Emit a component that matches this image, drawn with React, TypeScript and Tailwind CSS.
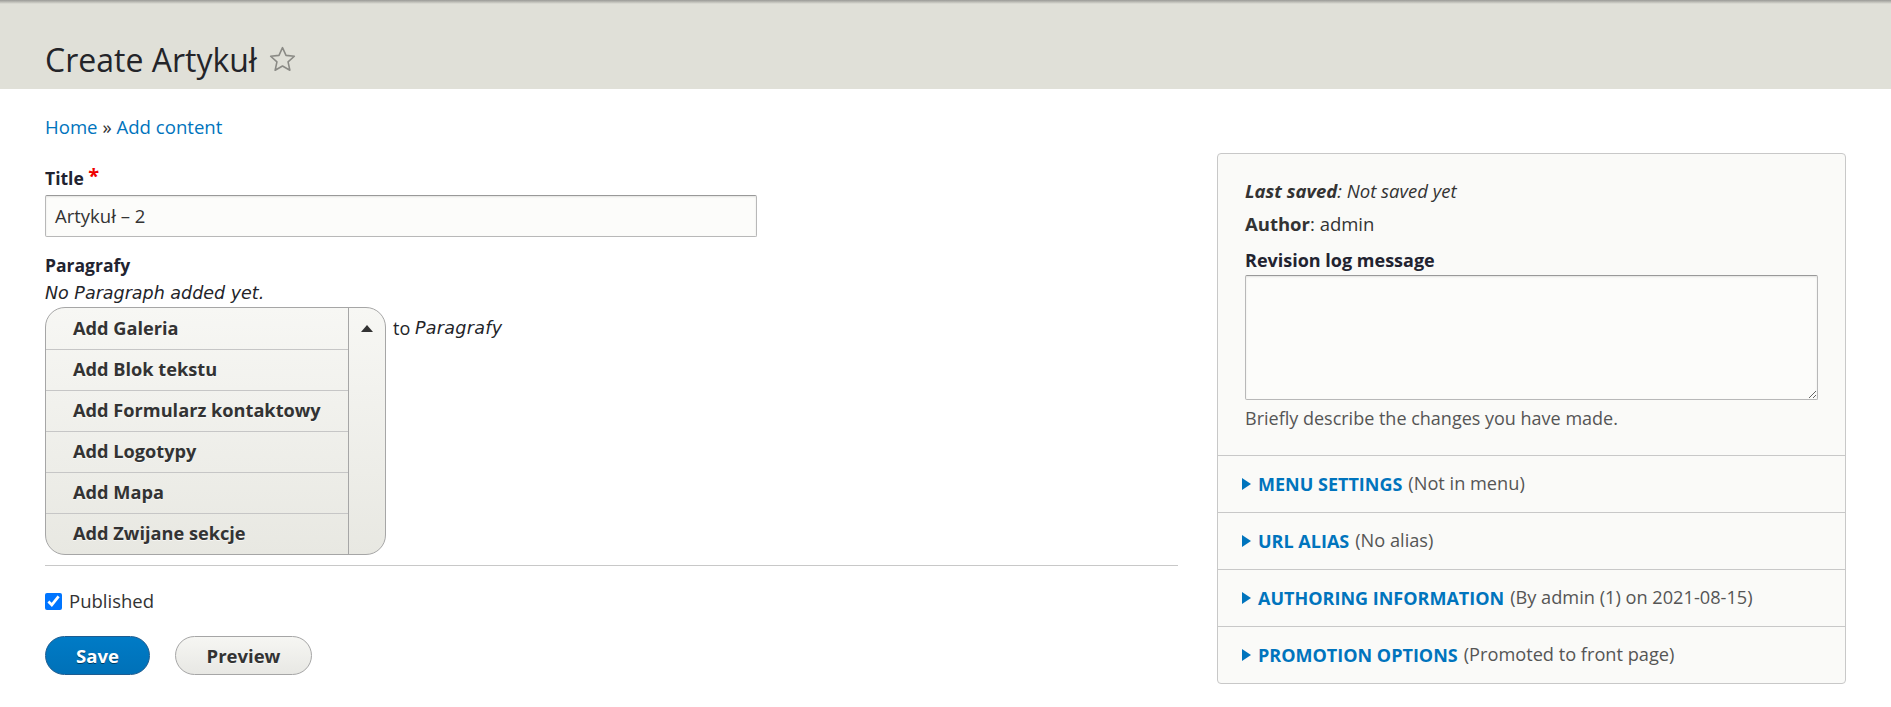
import React from "react";

const items = [
  "Add Galeria",
  "Add Blok tekstu",
  "Add Formularz kontaktowy",
  "Add Logotypy",
  "Add Mapa",
  "Add Zwijane sekcje",
];

const sections: [string, string][] = [
  ["MENU SETTINGS", "(Not in menu)"],
  ["URL ALIAS", "(No alias)"],
  ["AUTHORING INFORMATION", "(By admin (1) on 2021-08-15)"],
  ["PROMOTION OPTIONS", "(Promoted to front page)"],
];

export default function App() {
  return (
    <div className="min-h-[707px] bg-white text-[#232429] font-['Open_Sans','Noto_Sans',sans-serif]">
      <header className="h-[89px] bg-[#e0e0d8] relative">
        <div className="h-[4px] bg-gradient-to-b from-[#9a9a96] to-[#e0e0d8]" />
        <div className="flex items-center pl-[45px] pt-[37px]">
          <h1 className="text-[32px] leading-[38px] font-normal text-[#232429]">Create Artykuł</h1>
          <svg className="ml-[11px] mt-[-2px]" width="29" height="29" viewBox="0 0 24 24" fill="none" stroke="#8a8a85" strokeWidth="1.3" strokeLinejoin="round">
            <polygon points="12,2.2 14.9,8.6 21.8,9.3 16.6,14 18.1,20.9 12,17.4 5.9,20.9 7.4,14 2.2,9.3 9.1,8.6" />
          </svg>
        </div>
      </header>

      <div className="pl-[45px] mt-[26px] text-[18.6px] leading-[24px] text-[#0074bd]">
        <span>Home</span> <span className="text-[#333]">»</span> <span>Add content</span>
      </div>

      <div className="flex items-start pl-[45px] mt-[14px]">
        <div className="w-[1133px] pt-[13px]">
          <div className="text-[17.5px] leading-[24px] font-bold text-[#222330]">
            Title <span className="text-[#e00] text-[20px] align-top leading-[20px]">*</span>
          </div>
          <div className="mt-[5px] w-[712px] h-[42px] rounded-[2px] border border-[#b8b8b8] border-t-[#999] bg-[#fcfcfa] shadow-[inset_0_1px_2px_rgba(0,0,0,0.1)] flex items-center pl-[9px] text-[18.5px] text-[#333]">
            Artykuł – 2
          </div>

          <div className="mt-[14px] text-[17.5px] leading-[28px] font-bold text-[#222330]">Paragrafy</div>
          <div className="font-['DejaVu_Sans',sans-serif] text-[17.5px] leading-[28px] italic text-[#232429]">No Paragraph added yet.</div>

          <div className="flex items-start">
            <div className="flex w-[341px] rounded-[20px] border border-[#a6a6a6] overflow-hidden bg-gradient-to-b from-[#f7f7f4] to-[#e8e8e2]">
              <div className="w-[302px]">
                {items.map((t, i) => (
                  <div
                    key={t}
                    className={`h-[41px] flex items-center pl-[27px] text-[18.2px] font-bold text-[#333] [text-shadow:0_1px_hsla(0,0%,100%,0.6)] ${i > 0 ? "border-t border-[#c6c6c6]" : ""}`}
                  >
                    {t}
                  </div>
                ))}
              </div>
              <div className="flex-1 border-l border-[#a6a6a6] flex justify-center pt-[17px]">
                <svg width="12" height="7" viewBox="0 0 12 7">
                  <polygon points="6,0 12,7 0,7" fill="#333" />
                </svg>
              </div>
            </div>
            <div className="ml-[7px] h-[42px] flex items-center text-[18px] text-[#232429]">
              to&nbsp;<span className="italic font-['DejaVu_Sans',sans-serif] text-[17.5px] tracking-[0.3px]">Paragrafy</span>
            </div>
          </div>

          <div className="mt-[10px] h-px bg-[#c8c8c8]" />

          <div className="mt-[21px] flex items-center h-[28px]">
            <input type="checkbox" defaultChecked className="w-[17px] h-[17px] m-0 accent-[#0075ff]" />
            <span className="ml-[7px] text-[18.5px] text-[#333]">Published</span>
          </div>

          <div className="mt-[21px] flex gap-[25px]">
            <button className="w-[105px] h-[39px] rounded-[20px] border border-[#1e5c90] bg-gradient-to-b from-[#007bc6] to-[#0071b8] text-white font-bold text-[18.5px] [text-shadow:0_1px_hsla(0,0%,0%,0.5)]">
              Save
            </button>
            <button className="w-[137px] h-[39px] rounded-[20px] border border-[#a6a6a6] bg-gradient-to-b from-[#f6f6f3] to-[#e8e8e4] text-[#333] font-bold text-[18.5px] [text-shadow:0_1px_hsla(0,0%,100%,0.6)]">
              Preview
            </button>
          </div>
        </div>

        <aside className="ml-[39px] w-[629px] rounded-[4px] border border-[#c8c8c8] bg-[#fafaf8] text-[#333]">
          <div className="px-[27px] pt-[25px] pb-[26px]">
            <div className="text-[18.5px] leading-[24px] italic">
              <span className="font-bold">Last saved</span>: Not saved yet
            </div>
            <div className="mt-[9px] text-[18.5px] leading-[24px]">
              <span className="font-bold">Author</span>: admin
            </div>
            <div className="mt-[12px] text-[18px] leading-[24px] font-bold text-[#222330]">Revision log message</div>
            <textarea className="mt-[3px] block w-full h-[125px] rounded-[2px] border border-[#b8b8b8] border-t-[#999] bg-[#fcfcfa] shadow-[inset_0_1px_2px_rgba(0,0,0,0.1)]" />
            <div className="mt-[7px] text-[18px] leading-[22px] text-[#555]">Briefly describe the changes you have made.</div>
          </div>
          {sections.map(([a, b]) => (
            <div key={a} className="h-[57px] border-t border-[#c8c8c8] flex items-center pl-[24px]">
              <svg width="9" height="12" viewBox="0 0 9 12">
                <polygon points="0,0 9,6 0,12" fill="#0074bd" />
              </svg>
              <span className="ml-[7px] text-[18px] font-bold text-[#0074bd]">{a}</span>
              <span className="ml-[6px] text-[18.2px] text-[#555]">{b}</span>
            </div>
          ))}
        </aside>
      </div>
    </div>
  );
}
